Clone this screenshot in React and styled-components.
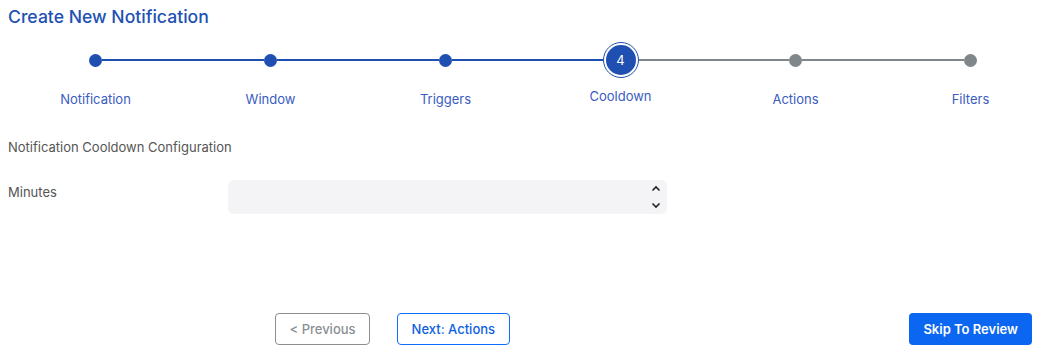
import React from "react";
import styled, { createGlobalStyle } from "styled-components";

const steps = ["Notification", "Window", "Triggers", "Cooldown", "Actions", "Filters"];
const ACTIVE = 3;

const App = () => {
    return (
        <Page>
            <GlobalStyle />
            <Title>Create New Notification</Title>
            <Stepper>
                {steps.map((name, i) => (
                    <Step key={name}>
                        <Track>
                            <Half $hidden={i === 0} $done={i <= ACTIVE} />
                            {i === ACTIVE ? (
                                <ActiveDot>
                                    <ActiveInner>{i + 1}</ActiveInner>
                                </ActiveDot>
                            ) : (
                                <Dot $done={i < ACTIVE} />
                            )}
                            <Half $hidden={i === steps.length - 1} $done={i < ACTIVE} />
                        </Track>
                        <StepLabel $active={i === ACTIVE}>{name}</StepLabel>
                    </Step>
                ))}
            </Stepper>

            <SectionTitle>Notification Cooldown Configuration</SectionTitle>

            <FieldRow>
                <FieldLabel>Minutes</FieldLabel>
                <NumberBox>
                    <Spinner>
                        <svg width="10" height="7" viewBox="0 0 10 7">
                            <path d="M1.5 5.5 L5 2 L8.5 5.5" fill="none" stroke="#222" strokeWidth="1.6" />
                        </svg>
                        <svg width="10" height="7" viewBox="0 0 10 7">
                            <path d="M1.5 1.5 L5 5 L8.5 1.5" fill="none" stroke="#222" strokeWidth="1.6" />
                        </svg>
                    </Spinner>
                </NumberBox>
            </FieldRow>

            <Footer>
                <OutlineButton $tone="gray">&lt; Previous</OutlineButton>
                <OutlineButton $tone="blue">Next: Actions</OutlineButton>
                <PrimaryButton>Skip To Review</PrimaryButton>
            </Footer>
        </Page>
    );
};

const GlobalStyle = createGlobalStyle`
  body {
    margin: 0;
    background: #fff;
    font-family: Inter, "Liberation Sans", sans-serif;
  }
`

const Page = styled.div`
  width: 1054px;
  padding: 6px 8px 0;
  box-sizing: border-box;
  overflow: hidden;
`

const Title = styled.h1`
  margin: 0;
  font-size: 17.6px;
  line-height: 22px;
  font-weight: 500;
  color: #2251b3;
`

const Stepper = styled.div`
  display: grid;
  grid-template-columns: repeat(6, 175px);
  width: 1050px;
  margin-top: 14px;
`

const Step = styled.div`
  display: flex;
  flex-direction: column;
  align-items: center;
`

const Track = styled.div`
  width: 100%;
  height: 36px;
  display: flex;
  align-items: center;
`

const Half = styled.div`
  flex: 1;
  height: 2px;
  background: ${p => p.$hidden ? "transparent" : p.$done ? "#1f4fb0" : "#7f878b"};
`

const Dot = styled.div`
  width: 13px;
  height: 13px;
  border-radius: 50%;
  flex-shrink: 0;
  background: ${p => p.$done ? "#1f4fb0" : "#7f878b"};
`

const ActiveDot = styled.div`
  width: 36px;
  height: 36px;
  box-sizing: border-box;
  border-radius: 50%;
  border: 1px solid #1f4fb0;
  padding: 2px;
  flex-shrink: 0;
  background: #fff;
`

const ActiveInner = styled.div`
  width: 100%;
  height: 100%;
  border-radius: 50%;
  background: #1f4fb0;
  color: #fff;
  font-size: 13px;
  font-weight: 400;
  display: flex;
  align-items: center;
  justify-content: center;
`

const StepLabel = styled.div`
  margin-top: ${p => p.$active ? "10px" : "13px"};
  font-size: 13px;
  line-height: 16px;
  color: #3a5cbf;
`

const SectionTitle = styled.div`
  margin-top: 32px;
  font-size: 13px;
  line-height: 16px;
  color: #555;
`

const FieldRow = styled.div`
  display: flex;
  align-items: flex-start;
  margin-top: 25px;
`

const FieldLabel = styled.div`
  width: 220px;
  padding-top: 4px;
  font-size: 13px;
  line-height: 16px;
  color: #555;
`

const NumberBox = styled.div`
  width: 439px;
  height: 34px;
  border-radius: 6px;
  background: #f4f4f6;
  display: flex;
  justify-content: flex-end;
  align-items: center;
`

const Spinner = styled.div`
  display: flex;
  flex-direction: column;
  gap: 10px;
  margin-right: 6px;
`

const Footer = styled.div`
  display: flex;
  align-items: center;
  gap: 27px;
  margin-top: 99px;
  padding-left: 267px;
  padding-right: 14px;
`

const OutlineButton = styled.button`
  height: 32px;
  padding: 0 13.5px;
  border-radius: 4px;
  background: #fff;
  font-family: inherit;
  font-size: 13px;
  font-weight: 500;
  border: 1px solid ${p => p.$tone === "blue" ? "#0d6efd" : "#8a8f93"};
  color: ${p => p.$tone === "blue" ? "#0d5fe0" : "#8a8f93"};
`

const PrimaryButton = styled.button`
  margin-left: auto;
  height: 32px;
  padding: 0 14px;
  border: none;
  border-radius: 4px;
  background: #0b66f1;
  color: #fff;
  font-family: inherit;
  font-size: 13px;
  font-weight: 600;
`

export default App;
